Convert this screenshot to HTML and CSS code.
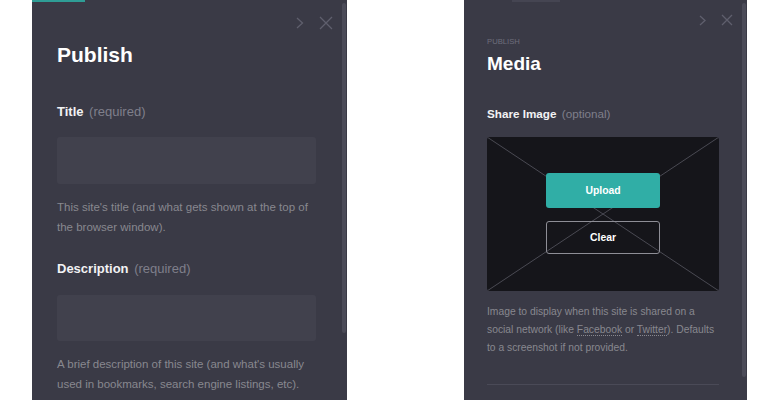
FILE: index.html
```html
<!DOCTYPE html>
<html lang="en">
<head>
<meta charset="utf-8">
<title>Publish</title>
<link rel="stylesheet" href="styles.css">
</head>
<body>
<section class="panel panel-publish">
  <div class="tab-indicator tab-active"></div>
  <div class="scroll-thumb thumb-left"></div>
  <div class="toolbar">
    <svg class="icon-chevron" width="8" height="12" viewBox="0 0 8 12"><polyline points="1,1 6.5,6 1,11" fill="none" stroke="#5f5f6d" stroke-width="1.3"/></svg>
    <svg class="icon-close" width="14" height="14" viewBox="0 0 14 14"><path d="M1 1 L13 13 M13 1 L1 13" fill="none" stroke="#5f5f6d" stroke-width="1.3"/></svg>
  </div>
  <div class="content">
    <h1 class="heading">Publish</h1>
    <div class="field">
      <label class="label">Title <span class="hint">(required)</span></label>
      <div class="input"></div>
      <p class="help">This site's title (and what gets shown at the top of the browser window).</p>
    </div>
    <div class="field field-next">
      <label class="label">Description <span class="hint">(required)</span></label>
      <div class="input input-b"></div>
      <p class="help">A brief description of this site (and what's usually used in bookmarks, search engine listings, etc).</p>
    </div>
  </div>
</section>

<section class="panel panel-media">
  <div class="tab-indicator tab-muted"></div>
  <div class="scroll-thumb thumb-right"></div>
  <div class="toolbar toolbar-sm">
    <svg class="icon-chevron" width="7" height="11" viewBox="0 0 7 11"><polyline points="1,1 6,5.5 1,10" fill="none" stroke="#5f5f6d" stroke-width="1.3"/></svg>
    <svg class="icon-close" width="12" height="12" viewBox="0 0 12 12"><path d="M1 1 L11 11 M11 1 L1 11" fill="none" stroke="#5f5f6d" stroke-width="1.3"/></svg>
  </div>
  <div class="content content-sm">
    <div class="eyebrow">PUBLISH</div>
    <h1 class="heading heading-sm">Media</h1>
    <label class="label label-sm">Share Image <span class="hint">(optional)</span></label>
    <div class="image-box">
      <svg class="image-cross" viewBox="0 0 232 154" preserveAspectRatio="none"><path d="M0 0 L232 154 M232 0 L0 154" stroke="#4a4a53" stroke-width="1" fill="none"/></svg>
      <div class="image-actions">
        <button class="btn btn-upload">Upload</button>
        <button class="btn btn-clear">Clear</button>
      </div>
    </div>
    <p class="help help-sm">Image to display when this site is shared on a social network (like <a class="link">Facebook</a> or <a class="link">Twitter</a>). Defaults to a screenshot if not provided.</p>
    <div class="separator"></div>
  </div>
</section>
</body>
</html>
```

FILE: styles.css
```css
html, body {
  margin: 0;
  padding: 0;
  background: #ffffff;
}

body {
  display: flex;
  align-items: flex-start;
  height: 400px;
  overflow: hidden;
  font-family: "Liberation Sans", Arial, sans-serif;
}

.panel {
  position: relative;
  height: 400px;
  background: #3a3a46;
  box-sizing: border-box;
}

.panel-publish {
  width: 315px;
  margin-left: 32px;
}

.panel-media {
  width: 283px;
  margin-left: 117px;
}

.tab-indicator {
  position: absolute;
  top: 0;
  height: 2px;
}

.tab-active {
  left: 0;
  width: 53px;
  background: #2f9d96;
}

.tab-muted {
  left: 48px;
  width: 48px;
  background: #454552;
}

.scroll-thumb {
  position: absolute;
  top: 3px;
  width: 4px;
  background: #4b4b58;
  border-radius: 2px;
}

.thumb-left {
  right: 1px;
  height: 330px;
}

.thumb-right {
  right: 1px;
  height: 374px;
}

.toolbar {
  display: flex;
  justify-content: flex-end;
  align-items: center;
  gap: 15px;
  padding: 16px 14px 0 0;
  height: 14px;
}

.toolbar-sm {
  padding-top: 14px;
  height: 12px;
  gap: 15px;
}

.toolbar svg {
  display: block;
}

.content {
  padding: 0 31px 0 25px;
}

.content-sm {
  padding: 0 28px 0 23px;
}

.heading {
  margin: 12px 0 0;
  font-size: 21px;
  line-height: 25px;
  font-weight: bold;
  color: #ffffff;
}

.heading-sm {
  margin-top: 5px;
  font-size: 19px;
  line-height: 23px;
}

.eyebrow {
  margin-top: 11px;
  font-size: 7.7px;
  line-height: 10px;
  color: #6e6e7c;
}

.field {
  margin-top: 37px;
}

.field-next {
  margin-top: 24px;
}

.label {
  display: block;
  font-size: 13px;
  line-height: 16px;
  font-weight: bold;
  color: #f2f2f4;
}

.label-sm {
  margin-top: 32px;
  font-size: 11.7px;
  line-height: 14px;
}

.hint {
  font-weight: normal;
  color: #7f7f8b;
  margin-left: 2px;
}

.input {
  margin-top: 17px;
  height: 47px;
  background: #41414d;
  border-radius: 3px;
}

.input-b {
  margin-top: 18px;
  height: 46px;
}

.help {
  margin: 13px 0 0;
  font-size: 11.5px;
  line-height: 20px;
  color: #88888f;
}

.help-sm {
  margin-top: 12px;
  font-size: 10.3px;
  line-height: 18px;
}

.link {
  color: inherit;
  text-decoration: none;
  border-bottom: 1px dotted #88888f;
}

.image-box {
  margin-top: 16px;
  height: 154px;
  background: #15151a;
  border-radius: 3px;
  display: grid;
  overflow: hidden;
}

.image-cross {
  grid-area: 1 / 1;
  width: 100%;
  height: 154px;
  display: block;
}

.image-actions {
  grid-area: 1 / 1;
  display: flex;
  flex-direction: column;
  align-items: center;
  justify-content: center;
  gap: 13px;
  padding-bottom: 1px;
}

.btn {
  width: 114px;
  font-family: "Liberation Sans", Arial, sans-serif;
  font-size: 10.4px;
  font-weight: bold;
  color: #ffffff;
  border-radius: 3px;
  cursor: pointer;
  padding: 0;
}

.btn-upload {
  height: 35px;
  background: #30aea6;
  border: none;
}

.btn-clear {
  height: 33px;
  background: transparent;
  border: 1px solid #8e8e96;
}

.separator {
  margin-top: 27px;
  height: 1px;
  background: #4a4a57;
}
```
